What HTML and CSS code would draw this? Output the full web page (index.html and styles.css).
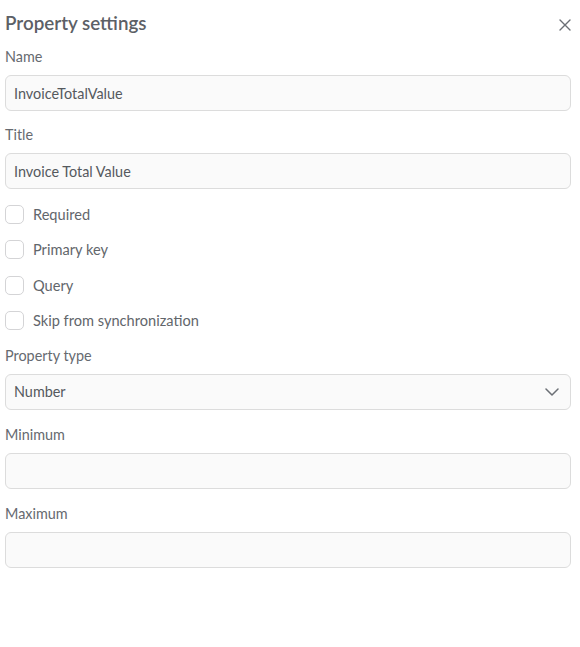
FILE: index.html
```html
<!DOCTYPE html>
<html>
<head>
<meta charset="utf-8">
<link rel="stylesheet" href="styles.css">
</head>
<body>
<div class="panel">
  <div class="header">
    <h1 class="title">Property settings</h1>
    <button class="close" aria-label="Close">
      <svg width="12" height="12" viewBox="0 0 12 12"><path d="M1 1L11 11M11 1L1 11" stroke="#6b6f75" stroke-width="1.4" stroke-linecap="round"/></svg>
    </button>
  </div>
  <div class="field">
    <label class="label">Name</label>
    <div class="input">InvoiceTotalValue</div>
  </div>
  <div class="field field-title">
    <label class="label">Title</label>
    <div class="input">Invoice Total Value</div>
  </div>
  <div class="checks">
    <div class="check"><span class="box"></span><span class="check-text">Required</span></div>
    <div class="check"><span class="box"></span><span class="check-text">Primary key</span></div>
    <div class="check"><span class="box"></span><span class="check-text">Query</span></div>
    <div class="check"><span class="box"></span><span class="check-text">Skip from synchronization</span></div>
  </div>
  <div class="field field-type">
    <label class="label">Property type</label>
    <div class="input select">
      <span>Number</span>
      <svg width="14" height="8" viewBox="0 0 14 8"><path d="M1 1L7 7L13 1" fill="none" stroke="#6b6f75" stroke-width="1.5" stroke-linecap="round" stroke-linejoin="round"/></svg>
    </div>
  </div>
  <div class="field">
    <label class="label">Minimum</label>
    <div class="input"></div>
  </div>
  <div class="field">
    <label class="label">Maximum</label>
    <div class="input"></div>
  </div>
</div>
</body>
</html>
```
FILE: styles.css
```css
* { box-sizing: border-box; }
html, body { margin: 0; padding: 0; background: #ffffff; }
body {
  font-family: "Lato", "Open Sans", "Liberation Sans", sans-serif;
  color: #5f6368;
}
.panel {
  padding: 0 9px 0 5px;
}
.header {
  height: 44px;
  display: flex;
  align-items: center;
  justify-content: space-between;
}
.title {
  margin: 0;
  font-size: 18.8px;
  font-weight: 600;
  color: #5c6066;
  padding-top: 1px;
}
.close {
  border: 0;
  background: none;
  padding: 0;
  width: 12px;
  height: 12px;
  margin-top: 6px;
  display: flex;
}
.field {
  display: flex;
  flex-direction: column;
  margin-top: 3px;
}
.field + .field { margin-top: 15px; }
.field.field-title { margin-top: 14px; }
.label {
  font-size: 14.4px;
  line-height: 20px;
  color: #666a70;
  margin-bottom: 8px;
}
.input {
  height: 36px;
  border: 1px solid #dcdcdc;
  border-radius: 6px;
  background: #fafafa;
  padding: 0 8px;
  display: flex;
  align-items: center;
  font-size: 14.4px;
  color: #55595e;
}
.select {
  justify-content: space-between;
  padding-right: 11px;
}
.checks {
  margin-top: 7.5px;
  display: flex;
  flex-direction: column;
}
.check {
  height: 35.5px;
  display: flex;
  align-items: center;
  gap: 9px;
}
.box {
  width: 19px;
  height: 19px;
  border: 1.5px solid #d4d4d6;
  border-radius: 5px;
  background: #ffffff;
}
.check-text {
  font-size: 14.6px;
  color: #62666b;
}
.field-type { margin-top: 7px; }
```
